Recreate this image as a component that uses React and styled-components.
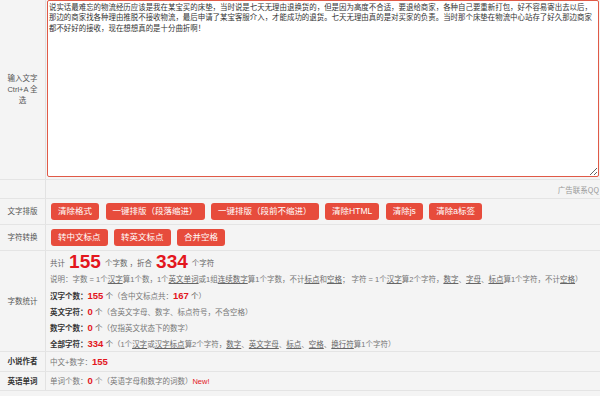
import React from 'react';
import styled, { createGlobalStyle } from 'styled-components';

const GlobalStyle = createGlobalStyle`
  html, body {
    margin: 0;
    padding: 0;
    background: #f4f4f4;
    overflow: hidden;
  }
  body {
    font-family: "Liberation Sans", "Noto Sans CJK SC", sans-serif;
  }
`;

const sample =
  '说实话最难忘的物流经历应该是我在某宝买的床垫，当时说是七天无理由退换货的，但是因为高度不合适，要退给商家，各种自己要重新打包，好不容易寄出去以后，\n' +
  '那边的商家找各种理由推脱不接收物流，最后申请了某宝客服介入，才能成功的退货。七天无理由真的是对买家的负责。当时那个床垫在物流中心站存了好久那边商家\n' +
  '都不好好的接收，现在想想真的是十分曲折啊！';

const layoutButtons = ['清除格式', '一键排版（段落缩进）', '一键排版（段前不缩进）', '清除HTML', '清除js', '清除a标签'];
const convertButtons = ['转中文标点', '转英文标点', '合并空格'];

const App = () => (
  <Page>
    <GlobalStyle />
    <Row>
      <Label>输入文字 Ctrl+A 全选</Label>
      <Cell $pad="0 0 0 1px">
        <TextBox defaultValue={sample} wrap="off" spellCheck={false} />
      </Cell>
    </Row>
    <Row $h={18}>
      <Label />
      <AdCell>
        <AdNote>广告联系QQ</AdNote>
      </AdCell>
    </Row>
    <Row $h={25}>
      <Label>文字排版</Label>
      <ButtonBar>
        {layoutButtons.map((b) => (
          <ActionButton key={b}>{b}</ActionButton>
        ))}
      </ButtonBar>
    </Row>
    <Row $h={25}>
      <Label>字符转换</Label>
      <ButtonBar>
        {convertButtons.map((b) => (
          <ActionButton key={b}>{b}</ActionButton>
        ))}
      </ButtonBar>
    </Row>
    <Row $h={100}>
      <Label>字数统计</Label>
      <StatCell>
        <TotalLine>
          共计 <BigNum>155</BigNum> 个字数 ，折合 <BigNum>334</BigNum> 个字符
        </TotalLine>
        <Line>
          说明：字数 = 1个<U>汉字</U>算1个数，1个<U>英文单词</U>或1组<U>连续数字</U>算1个字数，不计<U>标点</U>和<U>空格</U>； 字符 = 1个<U>汉字</U>算2个字符，<U>数字</U>、<U>字母</U>、<U>标点</U>算1个字符，不计<U>空格</U>）
        </Line>
        <Line>
          <Key>汉字个数：</Key><Num>155</Num> <Dark>个</Dark>（含中文标点共：<Num>167</Num> <Dark>个</Dark>）
        </Line>
        <Line>
          <Key>英文字符：</Key><Num>0</Num> <Dark>个</Dark>（含英文字母、数字、标点符号，不含空格）
        </Line>
        <Line>
          <Key>数字个数：</Key><Num>0</Num> <Dark>个</Dark>（仅指英文状态下的数字）
        </Line>
        <Line>
          <Key>全部字符：</Key><Num>334</Num> <Dark>个</Dark>（1个<U>汉字</U>或<U>汉字标点</U>算2个字符，<U>数字</U>、<U>英文字母</U>、<U>标点</U>、<U>空格</U>、<U>换行符</U>算1个字符）
        </Line>
      </StatCell>
    </Row>
    <Row $h={19}>
      <Label $strong>小说作者</Label>
      <StatCell $center>
        <Line>中文+数字：<Num>155</Num></Line>
      </StatCell>
    </Row>
    <Row $h={18}>
      <Label $strong>英语单词</Label>
      <StatCell $center>
        <Line>
          单词个数：<Num>0</Num> 个（英语字母和数字的词数）<New>New!</New>
        </Line>
      </StatCell>
    </Row>
  </Page>
);

const Page = styled.div`
  width: 600px;
  height: 396px;
  overflow: hidden;
  background: #f4f4f4;
`;

const Row = styled.div`
  display: flex;
  height: ${(p) => (p.$h ? `${p.$h}px` : 'auto')};
  border-bottom: 1px solid #e4e4e4;
`;

const Label = styled.div`
  width: 46px;
  flex-shrink: 0;
  box-sizing: border-box;
  padding: 0 4px;
  border-right: 1px solid #e2e2e2;
  display: flex;
  align-items: center;
  justify-content: center;
  text-align: center;
  font-size: 7.5px;
  line-height: 11px;
  color: ${(p) => (p.$strong ? '#333' : '#555')};
  font-weight: ${(p) => (p.$strong ? 'bold' : 'normal')};
`;

const Cell = styled.div`
  flex: 1;
  min-width: 0;
  padding: ${(p) => p.$pad || '0'};
`;

const TextBox = styled.textarea`
  display: block;
  box-sizing: border-box;
  width: 552px;
  height: 177px;
  margin: 0 0 2px;
  padding: 1px 1px;
  border: 1px solid #e05a47;
  border-radius: 2px;
  background: #fff;
  resize: both;
  outline: none;
  overflow: hidden;
  font-family: "Noto Sans CJK SC", sans-serif;
  font-size: 7.45px;
  line-height: 10.3px;
  color: #333;
`;

const AdCell = styled.div`
  flex: 1;
  display: flex;
  align-items: center;
  justify-content: flex-end;
  padding-right: 1px;
  white-space: nowrap;
  overflow: hidden;
`;

const AdNote = styled.span`
  font-family: "Noto Sans CJK SC", sans-serif;
  font-size: 7.5px;
  color: #999;
`;

const ButtonBar = styled.div`
  flex: 1;
  display: flex;
  align-items: flex-start;
  gap: 6.5px;
  padding: 4px 0 0 5px;
`;

const ActionButton = styled.button`
  height: 17px;
  padding: 0 7px;
  border: none;
  border-radius: 3px;
  background: #e74c3c;
  color: #fff;
  font-family: "Liberation Sans", "Noto Sans CJK SC", sans-serif;
  font-size: 8.5px;
  line-height: 17px;
  white-space: nowrap;
  cursor: pointer;
`;

const StatCell = styled.div`
  flex: 1;
  min-width: 0;
  display: flex;
  flex-direction: column;
  justify-content: ${(p) => (p.$center ? 'center' : 'flex-start')};
  padding: ${(p) => (p.$center ? '0 0 0 4px' : '1px 0 0 4px')};
  font-family: "Liberation Sans", "Noto Sans CJK SC", sans-serif;
  font-size: 7.5px;
  color: #777;
`;

const TotalLine = styled.div`
  height: 20px;
  display: flex;
  align-items: center;
  gap: 2px;
  white-space: pre;
  color: #666;
`;

const BigNum = styled.span`
  font-size: 19px;
  font-weight: bold;
  color: #e3161d;
`;

const Line = styled.div`
  height: 16px;
  line-height: 16px;
  white-space: nowrap;
`;

const U = styled.span`
  text-decoration: underline;
  color: #666;
`;

const Key = styled.span`
  color: #333;
  font-weight: bold;
`;

const Dark = styled.span`
  color: #444;
`;

const Num = styled.span`
  color: #e3161d;
  font-weight: bold;
  font-size: 9.5px;
`;

const New = styled.span`
  color: #e3161d;
`;

export default App;
